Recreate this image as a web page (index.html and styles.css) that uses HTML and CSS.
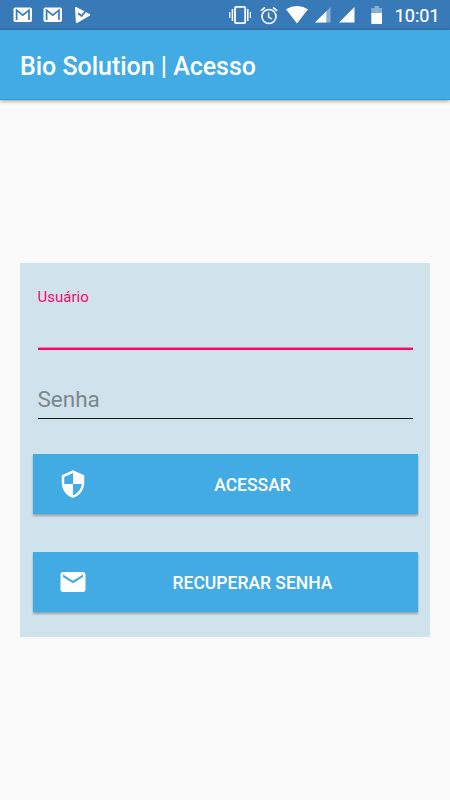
FILE: index.html
```html
<!DOCTYPE html>
<html lang="pt-BR">
<head>
    <meta charset="UTF-8">
    <meta name="viewport" content="width=device-width, initial-scale=1.0">
    <title>Bio Solution | Acesso</title>
    <link rel="stylesheet" href="styles.css">
</head>
<body>
    <!-- Status bar -->
    <div class="status-bar">
        <div class="notifications">
            <svg class="gmail" width="20" height="16" viewBox="0 0 20 16">
                <rect x="0.5" y="0.5" width="18.5" height="14.5" rx="1.8" fill="#fff"/>
                <path d="M3.6 13V3.2L9.8 8.2L16 3.2V13" fill="none" stroke="#3879b7" stroke-width="1.7"/>
            </svg>
            <svg class="gmail" width="20" height="16" viewBox="0 0 20 16">
                <rect x="0.5" y="0.5" width="18.5" height="14.5" rx="1.8" fill="#fff"/>
                <path d="M3.6 13V3.2L9.8 8.2L16 3.2V13" fill="none" stroke="#3879b7" stroke-width="1.7"/>
            </svg>
            <svg class="play" width="18" height="18" viewBox="0 0 18 18">
                <path d="M1 1.8Q1 .6 2.2 1L16 8.2Q16.6 8.8 16 9.4L3.6 16.8Q1.8 17.4 1.8 15.8Z" fill="#fff"/>
                <path d="M4.2 7.2L7.6 10L13.4 3" fill="none" stroke="#3879b7" stroke-width="1.8"/>
            </svg>
        </div>
        <div class="system-icons">
            <svg class="vibrate" width="22" height="20" viewBox="0 0 22 20" fill="none" stroke="#fff">
                <rect x="6" y="1.9" width="10.2" height="16.2" rx="1" stroke-width="1.8"/>
                <path d="M3.4 4V16M18.8 4V16" stroke-width="1.5"/>
                <path d="M0.8 7V13M21.3 7V13" stroke-width="1.2"/>
            </svg>
            <svg class="alarm" width="18" height="19" viewBox="0 0 18 19" fill="none" stroke="#fff">
                <circle cx="9" cy="10.5" r="7" stroke-width="1.6"/>
                <path d="M8.6 6.4V11L12 13" stroke-width="1.4"/>
                <path d="M0.9 4.8L5 1.4M17.1 4.8L13 1.4" stroke-width="1.7"/>
            </svg>
            <svg class="wifi" width="22" height="18" viewBox="0 0 22 18">
                <path d="M0 3.2Q11 -3.2 22 3.2L11 17.5Z" fill="#fff"/>
            </svg>
            <svg class="signal" width="16" height="16" viewBox="0 0 16 16">
                <path d="M15.5 0V15.5H0Z" fill="#fff" opacity="0.4"/>
                <path d="M11.3 4.2V15.5H0Z" fill="#fff"/>
            </svg>
            <svg class="signal-full" width="16" height="16" viewBox="0 0 16 16">
                <path d="M15.5 0V15.5H0Z" fill="#fff"/>
            </svg>
            <svg width="12" height="18" viewBox="0 0 12 18">
                <path d="M3.3 0H7.9V2H11V7H0.3V2H3.3Z" fill="#fff" opacity="0.4"/>
                <path d="M0.3 7H11V17.2Q11 18 10.2 18H1.1Q0.3 18 0.3 17.2Z" fill="#fff"/>
            </svg>
            <span class="clock">10:01</span>
        </div>
    </div>

    <div class="header">
        <h1>Bio Solution | Acesso</h1>
    </div>

    <div class="content">
        <form class="login-card" id="loginForm">
            <div class="form-group active">
                <label for="username">Usuário</label>
                <input type="text" id="username">
            </div>

            <div class="form-group">
                <input type="password" id="password" placeholder="Senha" aria-label="Senha">
            </div>

            <button type="submit">
                <svg width="30" height="30" viewBox="0 0 24 24">
                    <path d="M12 1L3 5v6c0 5.55 3.84 10.74 9 12 5.16-1.26 9-6.45 9-12V5l-9-4zm0 10.99h7c-.53 4.12-3.28 7.79-7 8.94V12H5V6.3l7-3.11v8.8z" fill="#fff"/>
                </svg>
                <span>ACESSAR</span>
            </button>

            <button type="button">
                <svg width="30" height="30" viewBox="0 0 24 24">
                    <path d="M20 4H4c-1.1 0-1.99.9-1.99 2L2 18c0 1.1.9 2 2 2h16c1.1 0 2-.9 2-2V6c0-1.1-.9-2-2-2zm0 4l-8 5-8-5V6l8 5 8-5v2z" fill="#fff"/>
                </svg>
                <span>RECUPERAR SENHA</span>
            </button>
        </form>
    </div>
</body>
</html>
```

FILE: styles.css
```css
* {
    box-sizing: border-box;
}

body {
    margin: 0;
    height: 100vh;
    display: flex;
    flex-direction: column;
    overflow: hidden;
    font-family: Roboto, sans-serif;
    background-color: #fafafa;
}

.status-bar {
    display: flex;
    flex: none;
    justify-content: space-between;
    align-items: center;
    height: 30px;
    padding: 0 10.5px 0 13px;
    background-color: #3879b7;
    color: white;
}

.notifications,
.system-icons {
    display: flex;
    align-items: center;
}

.gmail {
    margin-right: 10px;
}

.play {
    margin-left: 1px;
}

.vibrate {
    margin-right: 9px;
}

.alarm {
    margin-right: 8px;
}

.wifi {
    margin-right: 7px;
}

.signal {
    margin-right: 8px;
}

.signal-full {
    margin-right: 16px;
}

.clock {
    margin-left: 12px;
    padding-top: 1px;
    font-size: 18px;
    font-weight: 400;
    line-height: 29px;
    -webkit-text-stroke: 0.2px white;
}

.header {
    display: flex;
    flex: none;
    align-items: center;
    height: 70px;
    padding: 4px 20px 0;
    background-color: #43abe3;
    border-bottom: 1px solid #1ba3d8;
    box-shadow: 0 1px 4px rgba(0, 0, 0, 0.4);
    color: white;
}

.header h1 {
    margin: 0;
    font-size: 25px;
    font-weight: 500;
    letter-spacing: -0.03px;
}

.content {
    display: flex;
    flex: 1;
    align-items: center;
    padding: 0 20px;
}

.login-card {
    width: 100%;
    height: 374px;
    padding: 25px 12.5px 0;
    background-color: #d0e2eb;
}

.form-group {
    display: flex;
    flex-direction: column;
    margin: 0 5px 29px;
}

.form-group.active {
    margin-bottom: 31px;
}

label {
    height: 18px;
    color: #f5086b;
    font-size: 15px;
    line-height: 18px;
}

input {
    width: 100%;
    height: 38px;
    padding: 0 0 1px;
    border: none;
    border-bottom: 1px solid #161b1e;
    border-radius: 0;
    outline: none;
    background: transparent;
    font-family: inherit;
    font-size: 22.5px;
}

input::placeholder {
    color: #7c888d;
    opacity: 1;
}

.active input {
    height: 44px;
    border-bottom: 2px solid #f5086b;
    box-shadow: inset 0 -1px 0 #ee83ac;
}

button {
    display: flex;
    align-items: center;
    width: 100%;
    height: 60px;
    margin: 35px 0 0;
    padding: 0 0 0 25px;
    border: none;
    background-color: #43abe3;
    box-shadow: 0 2px 2px rgba(0, 0, 0, 0.28);
    color: white;
    font-family: inherit;
    font-size: 17.5px;
    font-weight: 500;
    cursor: pointer;
}

button span {
    flex: 1;
    padding-top: 2px;
    text-align: center;
}

button + button {
    margin-top: 37.5px;
}
```
